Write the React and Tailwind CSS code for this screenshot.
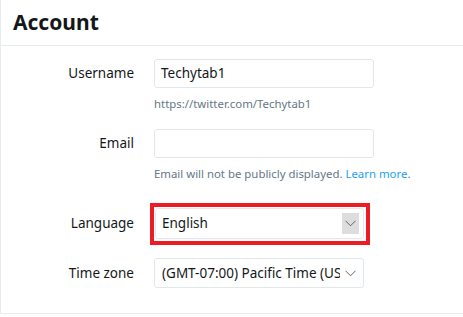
const font = { fontFamily: "'Noto Sans', 'Open Sans', sans-serif" }

function Chevron({ boxed }) {
  return (
    <span className={`flex items-center justify-center ${boxed ? 'h-[21px] w-[17px] bg-[#dddddd]' : 'h-[21px] w-[17px]'}`}>
      <svg width="11" height="7" viewBox="0 0 11 7" fill="none">
        <path d="M0.5 0.8 L5.5 5.8 L10.5 0.8" stroke="#5f6368" strokeWidth="1" />
      </svg>
    </span>
  )
}

export default function App() {
  return (
    <div className="h-[317px] w-[463px] bg-white text-[#14171a]" style={font}>
      <div className="h-[314px] border-b border-l border-[#e6ecf0]">
        <div className="flex h-[46px] items-center border-b border-[#e6ecf0] pl-[12px]">
          <h1 className="text-[21px] font-bold leading-none">Account</h1>
        </div>

        <div className="flex flex-col pt-[13px]">
          {/* Username */}
          <div className="flex items-center">
            <label className="w-[133px] text-right text-[13.5px]">Username</label>
            <div className="ml-[20px] flex h-[29px] w-[220px] items-center rounded-[3px] border border-[#e1e8ed] px-[6px] text-[13.5px]">
              Techytab1
            </div>
          </div>
          <div className="ml-[153px] mt-[8px] text-[11.4px] leading-[16px] text-[#657786]">
            https://twitter.com/Techytab1
          </div>

          {/* Email */}
          <div className="mt-[17px] flex items-center">
            <label className="w-[133px] text-right text-[13.5px]">Email</label>
            <div className="ml-[20px] h-[29px] w-[220px] rounded-[3px] border border-[#e1e8ed]" />
          </div>
          <div className="ml-[153px] mt-[8px] text-[11.4px] leading-[16px] text-[#657786]">
            Email will not be publicly displayed. <span className="text-[#1da1f2]">Learn more</span>.
          </div>

          {/* Language */}
          <div className="mt-[26px] flex items-center">
            <label className="w-[133px] text-right text-[13.5px]">Language</label>
            <div className="relative ml-[21px]">
              <div className="flex h-[31px] w-[209px] items-center justify-between rounded-[3px] border border-[#e1e8ed] pl-[6px] pr-[4px] text-[13.5px]">
                English
                <Chevron boxed />
              </div>
              <div className="pointer-events-none absolute -bottom-[6px] -left-[5px] -right-[6px] -top-[5px] border-[4px] border-[#ed1c24]" />
            </div>
          </div>

          {/* Time zone */}
          <div className="mt-[19px] flex items-center">
            <label className="w-[133px] text-right text-[13.5px]">Time zone</label>
            <div className="ml-[20px] flex h-[30px] w-[210px] items-center justify-between overflow-hidden rounded-[3px] border border-[#e1e8ed] pl-[7px] pr-[4px] text-[13.5px]">
              <span className="w-[178px] overflow-hidden whitespace-nowrap">(GMT-07:00) Pacific Time (US</span>
              <Chevron />
            </div>
          </div>
        </div>
      </div>
    </div>
  )
}
